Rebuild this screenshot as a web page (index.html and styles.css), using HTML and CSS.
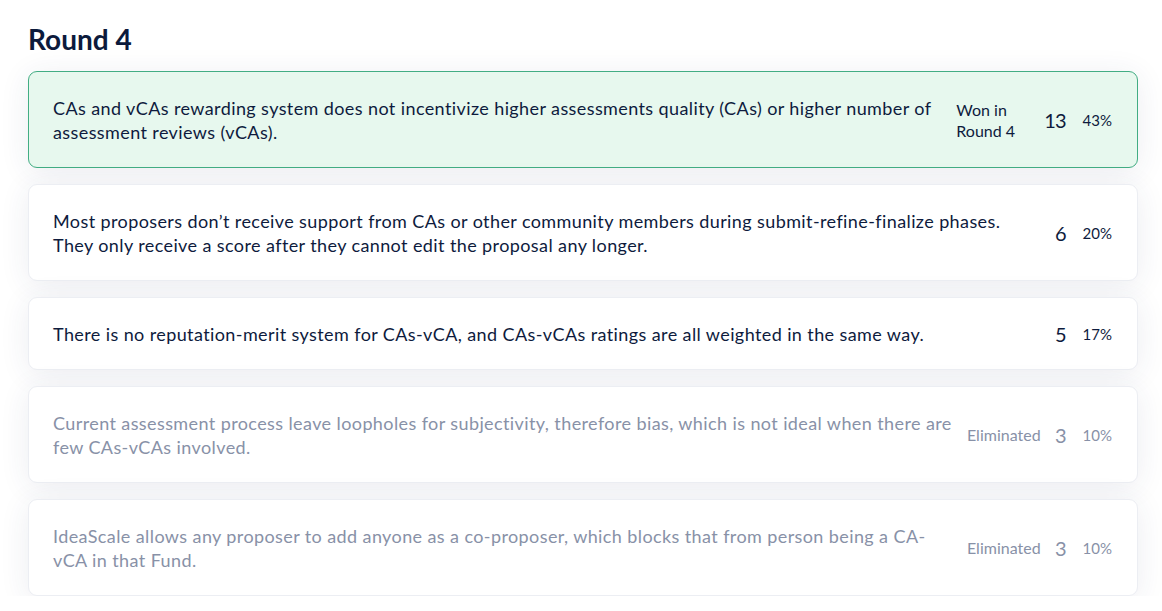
FILE: index.html
```html
<!DOCTYPE html>
<html lang="en">
<head>
<meta charset="utf-8">
<title>Round 4</title>
<link rel="stylesheet" href="styles.css">
</head>
<body>
<main class="round">
  <h2 class="round-title">Round 4</h2>
  <ul class="options">
    <li class="option option-won">
      <p class="option-text">CAs and vCAs rewarding system does not incentivize higher assessments quality (CAs) or higher number of assessment reviews (vCAs).</p>
      <div class="option-meta">
        <span class="status">Won in Round 4</span>
        <span class="votes">13</span>
        <span class="percent">43%</span>
      </div>
    </li>
    <li class="option">
      <p class="option-text">Most proposers don’t receive support from CAs or other community members during submit-refine-finalize phases. They only receive a score after they cannot edit the proposal any longer.</p>
      <div class="option-meta">
        <span class="votes">6</span>
        <span class="percent">20%</span>
      </div>
    </li>
    <li class="option">
      <p class="option-text">There is no reputation-merit system for CAs-vCA, and CAs-vCAs ratings are all weighted in the same way.</p>
      <div class="option-meta">
        <span class="votes">5</span>
        <span class="percent">17%</span>
      </div>
    </li>
    <li class="option option-out">
      <p class="option-text">Current assessment process leave loopholes for subjectivity, therefore bias, which is not ideal when there are few CAs-vCAs involved.</p>
      <div class="option-meta">
        <span class="status">Eliminated</span>
        <span class="votes">3</span>
        <span class="percent">10%</span>
      </div>
    </li>
    <li class="option option-out">
      <p class="option-text">IdeaScale allows any proposer to add anyone as a co-proposer, which blocks that from person being a CA-vCA in that Fund.</p>
      <div class="option-meta">
        <span class="status">Eliminated</span>
        <span class="votes">3</span>
        <span class="percent">10%</span>
      </div>
    </li>
  </ul>
</main>
</body>
</html>
```
FILE: styles.css
```css
* { box-sizing: border-box; }

html, body {
  margin: 0;
  padding: 0;
  background: #ffffff;
}

body {
  font-family: Lato, "Open Sans", sans-serif;
  color: #0e1b3d;
  overflow: hidden;
}

.round {
  padding: 22px 24px 0 28px;
}

.round-title {
  margin: 0 0 15px;
  font-size: 28px;
  line-height: 34px;
  font-weight: 700;
  color: #0c1a3c;
}

.options {
  list-style: none;
  margin: 0;
  padding: 0;
  display: flex;
  flex-direction: column;
  gap: 16px;
}

.option {
  display: flex;
  align-items: center;
  gap: 10px;
  padding: 23.5px 25px 23.5px 24px;
  background: #ffffff;
  border: 1px solid #eceef3;
  border-radius: 9px;
  box-shadow: 0 4px 30px rgba(40, 50, 100, 0.09);
}

.option-won {
  background: #e7f8ee;
  border-color: #42ad83;
}

.option-text {
  flex: 1;
  margin: 0;
  font-size: 18px;
  line-height: 24px;
  letter-spacing: 0.4px;
}

.option-meta {
  display: flex;
  align-items: center;
  gap: 17px;
  flex-shrink: 0;
}

.status {
  width: 71px;
  font-size: 16px;
  line-height: 21px;
}

.votes {
  font-size: 20px;
  line-height: 24px;
  letter-spacing: -1px;
}

.percent {
  font-size: 15px;
  line-height: 20px;
}

.option-out {
  color: #8891a7;
}
```
